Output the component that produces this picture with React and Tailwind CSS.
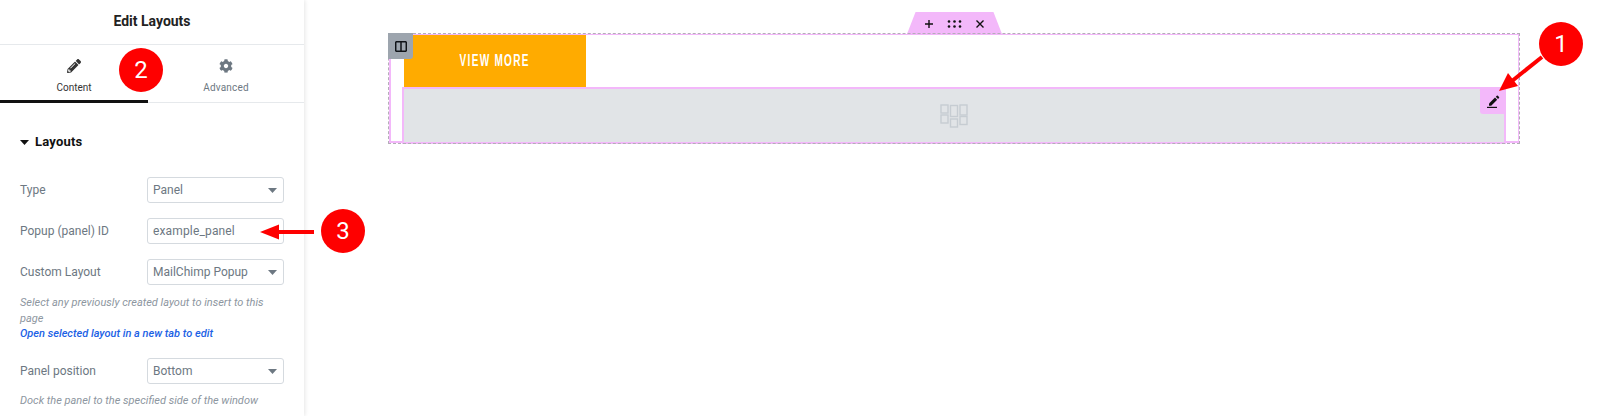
import { FaCog, FaPencilAlt } from "react-icons/fa";

const Caret = ({ className }) => (
  <svg className={className} width="9" height="5" viewBox="0 0 9 5">
    <path d="M0 0h9L4.5 5z" fill="currentColor" />
  </svg>
);

const Field = ({ label, value, select, className = "" }) => (
  <div className={`flex items-center justify-between ${className}`}>
    <span className="text-xs text-[#6d7882]">{label}</span>
    <div className="flex h-[26px] w-[137px] items-center justify-between rounded-[3px] border border-[#d5dadf] pl-[5px] pr-[6px] text-xs text-[#6d7882]">
      <span className={select ? "" : "tracking-[0.15px]"}>{value}</span>
      {select && <Caret className="text-[#6d7882]" />}
    </div>
  </div>
);

const Sidebar = () => (
  <aside className="h-[416px] w-[304px] shrink-0 overflow-hidden bg-white shadow-[1px_0_4px_rgba(0,0,0,0.1)]">
    <div className="flex h-[45px] items-center justify-center border-b border-[#e6e9ec] pb-[2px] text-sm font-bold text-[#222]">
      Edit Layouts
    </div>
    <div className="grid h-[58px] grid-cols-[148px_1fr] border-b border-[#e6e9ec]">
      <div className="-mb-px flex flex-col items-center border-b-[3px] border-[#111] pt-[14px] text-[#333]">
        <FaPencilAlt size={14} />
        <span className="mt-[9px] text-[10px] leading-[12px]">Content</span>
      </div>
      <div className="flex flex-col items-center pt-[14px] text-[#6d7882]">
        <FaCog size={14} />
        <span className="mt-[9px] text-[10px] leading-[12px] tracking-[0.2px]">Advanced</span>
      </div>
    </div>
    <div className="px-5 pb-5">
      <div className="mt-[30px] flex items-center gap-[6px] text-[#111]">
        <Caret />
        <span className="text-[13px] font-bold leading-[18px] tracking-[0.2px]">Layouts</span>
      </div>
      <Field className="mt-[26px]" label="Type" value="Panel" select />
      <Field className="mt-[15px]" label="Popup (panel) ID" value="example_panel" />
      <Field className="mt-[15px]" label="Custom Layout" value="MailChimp Popup" select />
      <p className="mt-[10px] text-[11px] italic leading-[16px] text-[#8d96a0]">
        Select any previously created layout to insert to this page
      </p>
      <a className="block text-[11px] font-medium italic leading-[14px] text-[#1c62e5]">
        Open selected layout in a new tab to edit
      </a>
      <Field className="mt-[17px]" label="Panel position" value="Bottom" select />
      <p className="mt-[9px] text-[11px] italic leading-[16px] text-[#8d96a0]">
        Dock the panel to the specified side of the window
      </p>
    </div>
  </aside>
);

const Toolbar = () => (
  <div className="absolute left-[518px] top-[-22px] flex h-[22px] w-[95px] items-center justify-center gap-[12px] bg-[#f3b8fa] pt-px [clip-path:polygon(9%_0,91%_0,100%_100%,0_100%)]">
    <svg width="12" height="12" viewBox="0 0 12 12">
      <path d="M6 2v8M2 6h8" stroke="#111" strokeWidth="1.4" />
    </svg>
    <svg width="15" height="8" viewBox="0 0 15 8" fill="#111">
      <circle cx="2" cy="1.5" r="1.3" />
      <circle cx="7.5" cy="1.5" r="1.3" />
      <circle cx="13" cy="1.5" r="1.3" />
      <circle cx="2" cy="6.5" r="1.3" />
      <circle cx="7.5" cy="6.5" r="1.3" />
      <circle cx="13" cy="6.5" r="1.3" />
    </svg>
    <svg width="12" height="12" viewBox="0 0 12 12">
      <path d="M2.5 2.5l7 7M9.5 2.5l-7 7" stroke="#111" strokeWidth="1.4" />
    </svg>
  </div>
);

const PlaceholderIcon = () => (
  <svg width="28" height="24" viewBox="0 0 28 24" fill="none" stroke="#c6ccd2" strokeWidth="1.4">
    <rect x="1" y="1" width="7" height="8" />
    <rect x="1" y="11" width="7" height="8" />
    <rect x="10.5" y="1.5" width="7" height="11" />
    <rect x="10.5" y="15" width="7" height="8" />
    <rect x="20" y="1" width="7" height="10" />
    <rect x="20" y="12.5" width="7" height="8" />
  </svg>
);

const Canvas = () => (
  <main className="min-w-0 flex-1 pl-[84px] pt-[33px]">
    <div className="relative h-[111px] w-[1132px] border border-transparent bg-white">
      <div className="absolute inset-0 border-b-2 border-l-2 border-r border-t border-[#f3b8fa]" />
      <Toolbar />
      <div className="relative pl-[15px] pt-[1px]">
        <div className="flex h-[52px] w-[182px] items-center justify-center overflow-hidden whitespace-nowrap bg-[#ffab00] font-['Liberation_Sans'] text-[16px] font-bold tracking-[2px] text-white">
          <span className="inline-block scale-x-[0.63]">VIEW MORE</span>
        </div>
      </div>
      <div className="relative ml-[13px] flex h-[57px] w-[1104px] items-center justify-center border-2 border-[#f3b8fa] bg-[#e1e4e7]">
        <PlaceholderIcon />
        <div className="absolute right-[-2px] top-[-1px] flex h-[26px] w-[26px] items-center justify-center rounded-bl-[3px] bg-[#f3b8fa]">
          <svg width="13" height="13" viewBox="0 0 13 13" fill="#111">
            <path d="M2 8.6L8 2.6l2.2 2.2-6 6H2z" />
            <path d="M8.8 1.8l1-1a.8.8 0 011.1 0l1.1 1.1a.8.8 0 010 1.1l-1 1z" />
            <rect x="0" y="11.8" width="10" height="1.2" />
          </svg>
        </div>
      </div>
      <div className="absolute -inset-px border border-dashed border-[#b4aeb8]" />
      <div className="absolute -left-px -top-px z-10 flex h-[26px] w-[25px] items-center justify-center rounded-br-[3px] bg-[#9da5ae]">
        <svg width="12" height="11" viewBox="0 0 12 11" fill="none" stroke="#0f1318" strokeWidth="1.5">
          <rect x="0.7" y="0.7" width="10.6" height="9.6" rx="1" />
          <path d="M6 1v9" />
        </svg>
      </div>
    </div>
  </main>
);

const Badge = ({ n, className }) => (
  <div className={`absolute z-20 flex size-11 items-center justify-center rounded-full bg-[#fe0000] text-[24px] leading-none text-white ${className}`}>
    {n}
  </div>
);

const Arrow = ({ className, width, height, line, head }) => (
  <svg className={`absolute z-20 ${className}`} width={width} height={height}>
    <path d={line} stroke="#fe0000" strokeWidth="4" />
    <path d={head} fill="#fe0000" />
  </svg>
);

export default function App() {
  return (
    <div className="relative flex h-[416px] w-[1601px] overflow-hidden bg-white font-['Roboto',sans-serif]">
      <Sidebar />
      <Canvas />
      <Badge n="2" className="left-[119px] top-[48px]" />
      <Badge n="3" className="left-[321px] top-[209px]" />
      <Badge n="1" className="left-[1539px] top-[22px]" />
      <Arrow
        className="left-[259px] top-[222px]"
        width={56}
        height={20}
        line="M15 10H55"
        head="M1 10L20 2.5V17.5z"
      />
      <Arrow
        className="left-[1494px] top-[52px]"
        width={50}
        height={44}
        line="M48 5L18 29"
        head="M5 39L14 21L24 34z"
      />
    </div>
  );
}
